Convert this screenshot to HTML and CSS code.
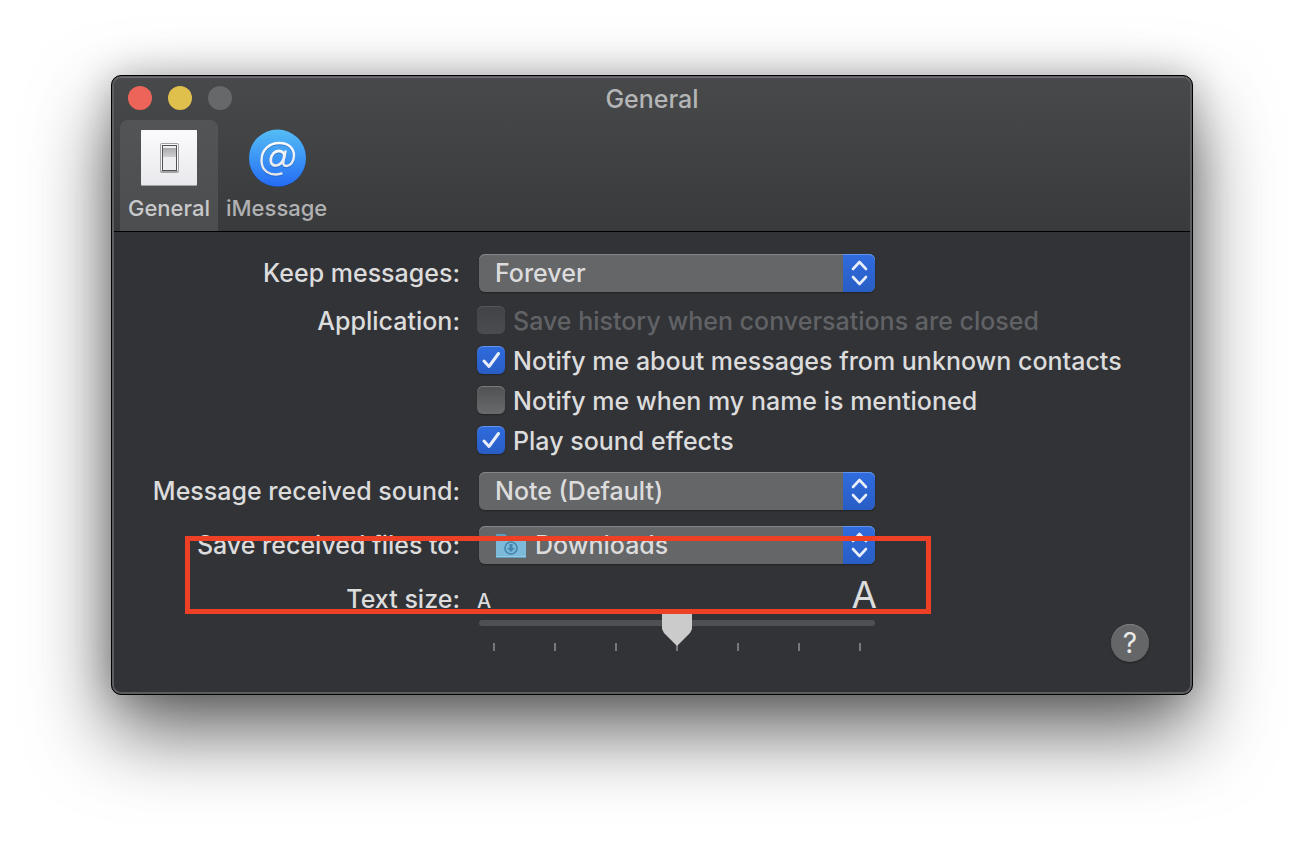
FILE: index.html
```html
<!DOCTYPE html>
<html lang="en">
<head>
<meta charset="utf-8">
<title>General</title>
<link rel="stylesheet" href="styles.css">
</head>
<body>
<main class="window">
  <header class="toolbar">
    <div class="titlebar">
      <div class="lights">
        <button class="light light-close" aria-label="Close"></button>
        <button class="light light-minimize" aria-label="Minimize"></button>
        <button class="light" aria-label="Zoom" disabled></button>
      </div>
      <h1 class="title">General</h1>
    </div>
    <nav class="tabs">
      <button class="tab tab-active">
        <svg class="tab-icon" viewBox="0 0 58 58" aria-hidden="true">
          <defs>
            <linearGradient id="plate" x2="0" y2="1"><stop stop-color="#fbfbfd"/><stop offset="1" stop-color="#e9e9ed"/></linearGradient>
            <linearGradient id="rocker" x2="0" y2="1"><stop stop-color="#a9aaad"/><stop offset="1" stop-color="#cfcfd2"/></linearGradient>
          </defs>
          <rect x="1" y="1" width="56" height="56" rx="1" fill="#a5a5a8"/>
          <rect x="1" y="1" width="56" height="55" rx="1" fill="url(#plate)"/>
          <rect x="20" y="14" width="19" height="30" rx="2" fill="#a2a2a5"/>
          <rect x="21" y="15" width="17" height="27" rx="1" fill="#f8f8fa"/>
          <rect x="22" y="16" width="15" height="26" fill="#505154"/>
          <rect x="23" y="17" width="13" height="24" fill="#eeeef1"/>
          <rect x="23" y="19" width="13" height="9" fill="url(#rocker)"/>
        </svg>
        <span>General</span>
      </button>
      <button class="tab">
        <svg class="tab-icon" viewBox="0 0 58 58" aria-hidden="true">
          <defs>
            <linearGradient id="sky" x2="0" y2="1"><stop stop-color="#54bdf5"/><stop offset="1" stop-color="#246cf5"/></linearGradient>
            <linearGradient id="ink" gradientUnits="userSpaceOnUse" x1="0" y1="12" x2="0" y2="46"><stop stop-color="#fff"/><stop offset="1" stop-color="#dfe2ea"/></linearGradient>
          </defs>
          <circle cx="29.500" cy="29.500" r="28.500" fill="#20437d"/>
          <circle cx="29.500" cy="29" r="28.500" fill="url(#sky)"/>
          <g fill="none" stroke-linecap="round" stroke-linejoin="round">
            <g stroke="#2253a5" stroke-opacity=".5" transform="translate(0 1)">
              <path d="M33.500 44.500C21 48 13.500 41 13.500 31.500C13.500 20.500 21.500 14 31.500 14C40.500 14 46 19.500 46 26.500C46 33 42 37 38.500 37C35.500 37 34.800 35 35.500 32L37.500 22.500" stroke-width="2.400"/>
              <path d="M36.200 28C35.300 33 31.500 36.600 27.500 36.600C24.200 36.600 22.400 34.200 22.800 30.500C23.300 25.500 26.600 22 30.700 22C34.500 22 36.900 24.500 36.200 28Z" stroke-width="2.800"/>
            </g>
            <g stroke="url(#ink)">
              <path d="M33.500 44.500C21 48 13.500 41 13.500 31.500C13.500 20.500 21.500 14 31.500 14C40.500 14 46 19.500 46 26.500C46 33 42 37 38.500 37C35.500 37 34.800 35 35.500 32L37.500 22.500" stroke-width="2.400"/>
              <path d="M36.200 28C35.300 33 31.500 36.600 27.500 36.600C24.200 36.600 22.400 34.200 22.800 30.500C23.300 25.500 26.600 22 30.700 22C34.500 22 36.900 24.500 36.200 28Z" stroke-width="2.800"/>
            </g>
          </g>
        </svg>
        <span>iMessage</span>
      </button>
    </nav>
  </header>

  <form class="form">
    <label class="label" for="keep">Keep messages:</label>
    <div class="popup">
      <select class="select" id="keep"><option>Forever</option></select>
      <svg class="arrows" viewBox="0 0 32 38" aria-hidden="true"><path d="M10 15L16.500 8L23 15M10 23L16.500 30L23 23"/></svg>
    </div>

    <div class="label label-checks" id="app">Application:</div>
    <div class="checks" role="group" aria-labelledby="app">
      <label class="check check-off"><input class="box" type="checkbox" disabled><span>Save history when conversations are closed</span></label>
      <label class="check"><input class="box" type="checkbox" checked><span>Notify me about messages from unknown contacts</span></label>
      <label class="check"><input class="box" type="checkbox"><span>Notify me when my name is mentioned</span></label>
      <label class="check"><input class="box" type="checkbox" checked><span>Play sound effects</span></label>
    </div>

    <label class="label" for="sound">Message received sound:</label>
    <div class="popup">
      <select class="select" id="sound"><option>Note (Default)</option></select>
      <svg class="arrows" viewBox="0 0 32 38" aria-hidden="true"><path d="M10 15L16.500 8L23 15M10 23L16.500 30L23 23"/></svg>
    </div>

    <label class="label" for="folder">Save received files to:</label>
    <div class="popup">
      <select class="select select-folder" id="folder"><option>Downloads</option></select>
      <svg class="folder" viewBox="0 0 30 26" aria-hidden="true">
        <path d="M0 25V2Q0 1 1 1H9L11 3H29Q30 3 30 4V25Z" fill="#5d9dbd"/>
        <path d="M0 6H30V23Q30 24 29 24H1Q0 24 0 23Z" fill="#7db9d9"/>
        <path d="M0 23H30V24H0Z" fill="#94cae4"/>
        <circle cx="15" cy="15" r="6" fill="none" stroke="#4486ad" stroke-width="1.600"/>
        <path d="M13.500 11H16.500V15H19L15 19L11 15H13.500Z" fill="#4486ad"/>
      </svg>
      <svg class="arrows" viewBox="0 0 32 38" aria-hidden="true"><path d="M10 15L16.500 8L23 15M10 23L16.500 30L23 23"/></svg>
    </div>

    <label class="label" for="size">Text size:</label>
    <div class="size-row">
      <div class="size">
        <div class="size-ends"><span class="small-a">A</span><span class="large-a">A</span></div>
        <input class="slider" id="size" type="range" min="0" max="6" value="3">
        <div class="ticks"><i class="tick"></i><i class="tick"></i><i class="tick"></i><i class="tick"></i><i class="tick"></i><i class="tick"></i><i class="tick"></i></div>
      </div>
      <button class="help" type="button" aria-label="Help">?</button>
    </div>
    <div class="highlight"></div>
  </form>
</main>
</body>
</html>
```

FILE: styles.css
```css
* { box-sizing: border-box; }

body {
  margin: 0;
  min-height: 100vh;
  padding: 75px 111px;
  background: #fff;
  font-family: Inter, "Liberation Sans", sans-serif;
  font-size: 25px;
  font-weight: 500;
  line-height: 32px;
  color: #dcdcdd;
}

button, select, input { margin: 0; font: inherit; color: inherit; }
button { padding: 0; border: 0; background: none; }

.window {
  border: 1px solid #000;
  border-radius: 10px;
  background: #323337;
  box-shadow: inset 0 0 0 2px #5c5d60, 0 36px 80px rgba(0, 0, 0, 0.62), 0 0 36px rgba(0, 0, 0, 0.22);
  padding: 2px;
}

.toolbar {
  border-bottom: 1px solid #000;
  border-radius: 7px 7px 0 0;
  background: linear-gradient(#48494b, #393a3c);
  box-shadow: 0 -1px #707174;
}

.titlebar {
  display: grid;
  grid-template-columns: 1fr auto 1fr;
  align-items: center;
  height: 42px;
  padding: 0 14px;
}

.lights { display: flex; gap: 16px; margin-top: -2px; }
.light { width: 24px; height: 24px; border-radius: 50%; background: #67686a; }
.light-close { background: #ed655a; }
.light-minimize { background: #e0c04c; }

.title { margin: 0; font-size: 25px; font-weight: 500; color: #b4b5b6; }

.tabs { display: flex; padding-left: 6px; }

.tab {
  display: flex;
  flex-direction: column;
  align-items: center;
  gap: 6px;
  height: 111px;
  padding: 9px 8px 0;
  border-radius: 8px 8px 0 0;
  font-size: 22px;
  line-height: 30px;
  color: #b0b1b2;
}
.tab-active { background: linear-gradient(#535456, #4c4d4f); color: #c8c9ca; }
.tab-icon { width: 58px; height: 58px; }

.form {
  position: relative;
  display: grid;
  grid-template-columns: 346px 1fr;
  column-gap: 17px;
  padding: 22px 41px 41px 0;
}

.label { text-align: right; line-height: 38px; }
.label-checks { margin-top: -6px; }

.popup { position: relative; width: 396px; height: 38px; margin: 0 0 16px 2px; }

.select {
  appearance: none;
  width: 100%;
  height: 38px;
  padding: 0 40px 0 16px;
  border: 0;
  border-radius: 6px;
  background: #656668;
  box-shadow: inset 0 1px #858688, 0 1px 2px rgba(0, 0, 0, 0.35);
  line-height: 38px;
}
.select-folder { padding-left: 56px; }

.arrows {
  position: absolute;
  top: 0;
  right: 0;
  width: 32px;
  height: 38px;
  border-radius: 0 6px 6px 0;
  background: linear-gradient(#306cde, #285dc4);
  box-shadow: inset 0 1px #6495ec;
  fill: none;
  stroke: #e8edfa;
  stroke-width: 2.600;
  stroke-linecap: round;
  stroke-linejoin: round;
  pointer-events: none;
}

.folder { position: absolute; left: 17px; top: 7px; width: 30px; height: 26px; pointer-events: none; }

.checks { margin: -8px 0 12px; }
.check { display: flex; align-items: center; gap: 8px; height: 40px; line-height: 34px; white-space: nowrap; }
.check span { padding-top: 2px; }
.check-off { color: #616265; }

.box {
  appearance: none;
  flex: none;
  width: 28px;
  height: 28px;
  border-radius: 6px;
  background: linear-gradient(#505153, #686a6b);
  box-shadow: inset 0 1px #78797b, 0 1px 2px rgba(0, 0, 0, 0.3);
}
.box:disabled { background: linear-gradient(#424346, #4b4c4f); box-shadow: inset 0 1px #56575a; }
.box:checked {
  background: url("data:image/svg+xml,%3Csvg xmlns='http://www.w3.org/2000/svg' viewBox='0 0 28 28'%3E%3Cpath d='M7 15L12 20.500L21.500 7.500' fill='none' stroke='%23e8edfa' stroke-width='3' stroke-linecap='round' stroke-linejoin='round'/%3E%3C/svg%3E"), linear-gradient(#306cde, #285dc4);
  box-shadow: inset 0 1px #6495ec, 0 1px 2px rgba(0, 0, 0, 0.3);
}

.size-row { display: flex; justify-content: space-between; align-items: flex-end; }
.size { width: 396px; margin-left: 2px; }

.size-ends { display: flex; justify-content: space-between; align-items: baseline; height: 30px; margin: 0 -2px; }
.small-a { font-size: 20px; }
.large-a { font-size: 37px; font-weight: 400; line-height: 30px; }

.slider {
  appearance: none;
  display: block;
  width: 100%;
  height: 36px;
  background: none;
}
.slider::-webkit-slider-runnable-track {
  height: 36px;
  background: url("data:image/svg+xml,%3Csvg xmlns='http://www.w3.org/2000/svg'%3E%3Crect width='100%25' height='6' rx='3' fill='%234f5053'/%3E%3C/svg%3E") 0 10px / 100% 6px no-repeat;
}
.slider::-webkit-slider-thumb {
  appearance: none;
  width: 30px;
  height: 36px;
  background: #cbcbcb;
  clip-path: polygon(0 4px, 4px 0, 26px 0, 30px 4px, 30px 19px, 28px 23px, 15px 36px, 2px 23px, 0 19px);
}

.ticks { display: flex; justify-content: space-between; height: 8px; margin: -3px 14px 0; }
.tick { width: 2px; height: 8px; background: #77787a; }

.help {
  width: 38px;
  height: 38px;
  margin-bottom: -11px;
  border-radius: 50%;
  background: #656668;
  box-shadow: inset 0 1px #7b7c7e, 0 1px 2px rgba(0, 0, 0, 0.35);
  font-size: 28px;
  font-weight: 400;
  line-height: 38px;
  color: #e9e9ea;
}

.highlight {
  position: absolute;
  left: 71px;
  top: 304px;
  width: 746px;
  height: 78px;
  border: 5px solid #ee4024;
  pointer-events: none;
}
```
